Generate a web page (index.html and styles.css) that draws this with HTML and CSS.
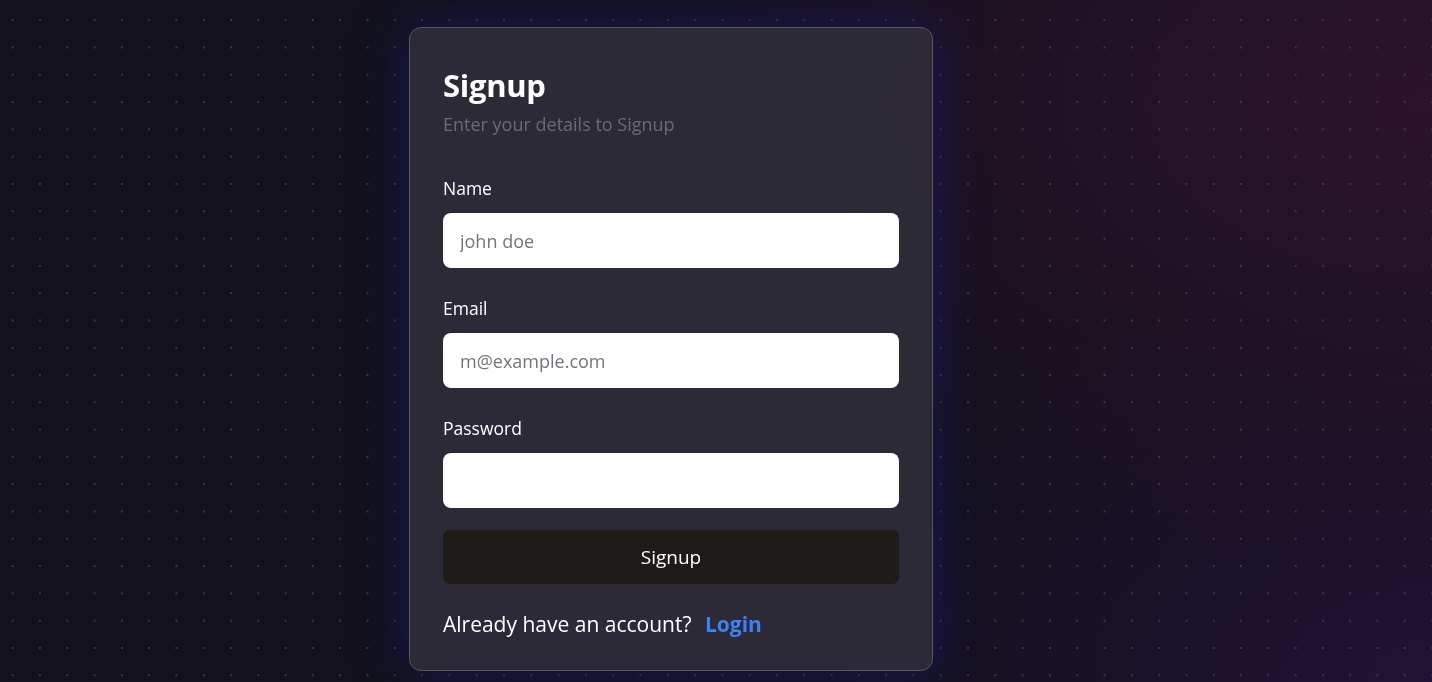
FILE: index.html
```html
<!DOCTYPE html>
<html lang="en">
<head>
<meta charset="utf-8">
<title>Signup</title>
<link rel="stylesheet" href="styles.css">
</head>
<body>
<main class="page">
  <form class="card">
    <h1 class="title">Signup</h1>
    <p class="subtitle">Enter your details to Signup</p>
    <div class="field">
      <label class="label" for="name">Name</label>
      <input class="input" id="name" type="text" placeholder="john doe">
    </div>
    <div class="field">
      <label class="label" for="email">Email</label>
      <input class="input" id="email" type="email" placeholder="m@example.com">
    </div>
    <div class="field">
      <label class="label" for="password">Password</label>
      <input class="input" id="password" type="password">
    </div>
    <button class="btn" type="button">Signup</button>
    <p class="footer">Already have an account? <a class="link" href="#">Login</a></p>
  </form>
</main>
</body>
</html>
```
FILE: styles.css
```css
* { box-sizing: border-box; }
html, body { height: 100%; }
body {
  margin: 0;
  font-family: "Open Sans", "Noto Sans", sans-serif;
  color: #fff;
  background-color: #12111c;
  background-image:
    radial-gradient(circle, #3b3a44 1px, transparent 1.4px),
    radial-gradient(ellipse 55% 70% at 100% 15%, rgba(48, 19, 45, 0.9), rgba(48, 19, 45, 0) 100%),
    radial-gradient(ellipse 45% 60% at 100% 100%, rgba(34, 18, 56, 0.85), rgba(34, 18, 56, 0) 100%);
  background-size: 27.3px 27.3px, 100% 100%, 100% 100%;
  background-position: -1px 6.5px, 0 0, 0 0;
  overflow: hidden;
}
.page {
  padding: 27px 0 0 409px;
}
.card {
  width: 524px;
  height: 644px;
  padding: 37px 33px 0 33px;
  border: 1px solid #57555f;
  border-radius: 12px;
  background: rgba(46, 44, 56, 0.93);
  backdrop-filter: blur(2px);
  box-shadow: 0 0 45px 6px rgba(28, 28, 105, 0.55);
  display: flex;
  flex-direction: column;
}
.title {
  margin: 0;
  font-size: 31px;
  line-height: 40px;
  font-weight: 700;
  letter-spacing: -0.3px;
}
.subtitle {
  margin: 7px 0 0;
  font-size: 18px;
  line-height: 24px;
  color: #6c6a73;
}
.field {
  display: flex;
  flex-direction: column;
  margin-top: 40px;
}
.field + .field { margin-top: 28px; }
.label {
  font-size: 17.5px;
  line-height: 24px;
  margin-bottom: 13px;
}
.input {
  height: 55px;
  border: none;
  border-radius: 8px;
  background: #fff;
  padding: 0 17px;
  font-family: inherit;
  font-size: 18px;
  color: #111;
  outline: none;
}
.input::placeholder { color: #757380; }
.btn {
  margin-top: 22px;
  height: 54px;
  border: none;
  border-radius: 7px;
  background: #1e1b18;
  color: #fff;
  font-family: inherit;
  font-size: 19px;
}
.footer {
  margin: 25px 0 0;
  font-size: 21px;
  line-height: 30px;
}
.link {
  color: #3b82f6;
  font-weight: 700;
  text-decoration: none;
  margin-left: 8px;
}
```
